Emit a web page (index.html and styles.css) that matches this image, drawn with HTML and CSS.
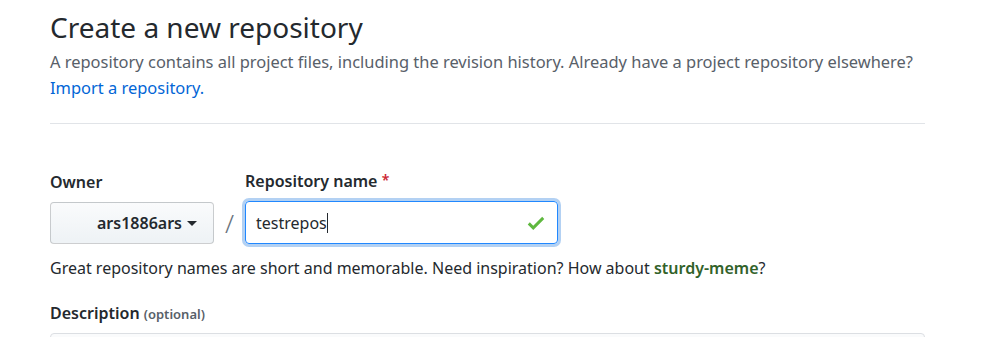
FILE: index.html
```html
<!DOCTYPE html>
<html lang="en">
<head>
    <meta charset="UTF-8">
    <title>Create a new repository</title>
    <link rel="stylesheet" href="styles.css">
</head>
<body>
    <div class="container">
        <div class="subhead">
            <h1 class="subhead-heading">Create a new repository</h1>
            <p class="subhead-description">
                A repository contains all project files, including the revision history. Already have a project repository elsewhere?
                <a href="#" class="link">Import a repository.</a>
            </p>
        </div>

        <div class="owner-reponame">
            <div class="form-group">
                <label class="form-label">Owner</label>
                <button class="owner-button">
                    ars1886ars
                    <span class="caret"></span>
                </button>
            </div>
            <span class="slash">/</span>
            <div class="form-group">
                <label class="form-label">Repository name <span class="required">*</span></label>
                <div class="name-input">
                    <span class="name-value">testrepos</span><span class="cursor"></span>
                    <svg class="check" width="22" height="22" viewBox="0 0 12 16">
                        <path fill="#5fb83f" fill-rule="evenodd" d="M12 5l-8 8-4-4 1.5-1.5L4 10l6.5-6.5L12 5z"></path>
                    </svg>
                </div>
            </div>
        </div>

        <p class="note">Great repository names are short and memorable. Need inspiration? How about <strong class="suggestion">sturdy-meme</strong>?</p>

        <div class="form-group">
            <label class="form-label">Description <span class="optional">(optional)</span></label>
            <div class="description-input"></div>
        </div>
    </div>
</body>
</html>
```

FILE: styles.css
```css
* {
    margin: 0;
    padding: 0;
    box-sizing: border-box;
}

body {
    font-family: 'Noto Sans', 'Open Sans', sans-serif;
    font-size: 16px;
    color: #24292e;
    background-color: #fff;
    padding: 0 71px 0 50px;
}

.container {
    width: 875px;
}

.subhead {
    padding-top: 5px;
    padding-bottom: 22px;
    border-bottom: 1px solid #e1e4e8;
    margin-bottom: 44px;
}

.subhead-heading {
    font-size: 28px;
    font-weight: 400;
    line-height: 44px;
}

.subhead-description {
    font-size: 16.45px;
    line-height: 26px;
    color: #586069;
}

.link {
    color: #0366d6;
    text-decoration: none;
}

.owner-reponame {
    display: flex;
    align-items: flex-end;
}

.form-group {
    display: flex;
    flex-direction: column;
}

.form-label {
    font-weight: 600;
    font-size: 16px;
    line-height: 24px;
    margin-bottom: 8px;
}

.required {
    color: #cb2431;
    font-size: 14px;
    vertical-align: 2px;
}

.optional {
    font-size: 13px;
    color: #586069;
}

.owner-button {
    width: 164px;
    height: 42px;
    font-family: inherit;
    font-size: 16px;
    font-weight: 600;
    color: #24292e;
    background-image: linear-gradient(-180deg, #fafbfc 0%, #eff3f6 90%);
    border: 1px solid rgba(27, 31, 35, 0.2);
    border-radius: 4px;
    display: flex;
    align-items: center;
    justify-content: flex-end;
    gap: 5px;
    padding-right: 16px;
}

.caret {
    width: 0;
    height: 0;
    border-top: 5px solid #24292e;
    border-left: 5px solid transparent;
    border-right: 5px solid transparent;
}

.slash {
    font-size: 26px;
    font-weight: 300;
    color: #6a737d;
    width: 31px;
    text-align: center;
    height: 42px;
    line-height: 42px;
}

.name-input {
    width: 313px;
    height: 43px;
    border: 1px solid #2188ff;
    border-radius: 4px;
    box-shadow: 0 0 0 3px rgba(3, 102, 214, 0.3);
    display: flex;
    align-items: center;
    padding: 0 10px;
    font-size: 16px;
}

.cursor {
    width: 1px;
    height: 20px;
    background: #24292e;
}

.check {
    margin-left: auto;
}

.note {
    margin-top: 12px;
    font-size: 16px;
    line-height: 24px;
    margin-bottom: 21px;
}

.suggestion {
    color: #32622a;
    font-weight: 600;
}

.description-input {
    height: 40px;
    margin-top: -1px;
    border: 1px solid #dcdfe3;
    border-radius: 4px;
    background: #fafbfc;
}
```
